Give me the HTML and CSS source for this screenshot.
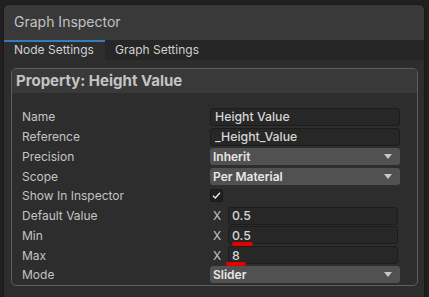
FILE: index.html
```html
<!DOCTYPE html>
<html>
<head>
<meta charset="utf-8">
<link rel="stylesheet" href="styles.css">
</head>
<body>
<div class="window">
  <div class="titlebar">Graph Inspector</div>
  <div class="tabs">
    <div class="tab active">Node Settings</div>
    <div class="tab">Graph Settings</div>
  </div>
  <div class="content">
    <div class="box">
      <div class="box-header">Property: Height Value</div>
      <div class="box-body">
        <div class="row"><span class="label">Name</span><div class="field"><span class="text">Height Value</span></div></div>
        <div class="row"><span class="label">Reference</span><div class="field"><span class="text">_Height_Value</span></div></div>
        <div class="row"><span class="label">Precision</span><div class="dropdown"><span>Inherit</span><span class="arrow"></span></div></div>
        <div class="row"><span class="label">Scope</span><div class="dropdown"><span>Per Material</span><span class="arrow"></span></div></div>
        <div class="row"><span class="label">Show In Inspector</span><div class="check"><svg width="11" height="11" viewBox="0 0 11 11"><path d="M2 5.8 L4.3 8 L9 2.8" fill="none" stroke="#e8e8e8" stroke-width="1.4"/></svg></div></div>
        <div class="row"><span class="label">Default Value</span><div class="vec"><span class="axis">X</span><div class="field num"><span class="text">0.5</span></div></div></div>
        <div class="row"><span class="label">Min</span><div class="vec"><span class="axis">X</span><div class="field num"><span class="text">0.5</span></div><span class="mark mark-min"></span></div></div>
        <div class="row"><span class="label">Max</span><div class="vec"><span class="axis">X</span><div class="field num"><span class="text">8</span></div><span class="mark mark-max"></span></div></div>
        <div class="row"><span class="label">Mode</span><div class="dropdown"><span>Slider</span><span class="arrow"></span></div></div>
      </div>
    </div>
  </div>
</div>
</body>
</html>
```
FILE: styles.css
```css
html, body {
  margin: 0;
  height: 100%;
}
body {
  background: #202020;
  font-family: Inter, "Noto Sans", sans-serif;
  color: #c4c4c4;
  padding: 4px 4px 0 3px;
  box-sizing: border-box;
  overflow: hidden;
}
.window {
  height: 100%;
  background: #2d2d2d;
  border: 1px solid #191919;
  border-bottom: none;
  border-radius: 6px 6px 0 0;
  overflow: hidden;
  display: flex;
  flex-direction: column;
}
.titlebar {
  height: 35px;
  background: #393939;
  font-size: 14px;
  line-height: 34px;
  padding-left: 10px;
  color: #c2c2c2;
  flex: none;
}
.tabs {
  height: 20px;
  background: #262626;
  display: flex;
  flex: none;
}
.tab {
  font-size: 12px;
  line-height: 20px;
  padding: 0 10px;
  color: #d0d0d0;
  white-space: nowrap;
}
.tab.active {
  background: #2d2d2d;
  box-shadow: inset 0 2px 0 #3a79bb;
  width: 101px;
  box-sizing: border-box;
}
.content {
  padding: 8px 6px 0 7px;
}
.box {
  border: 1px solid #5e5e5e;
  border-radius: 5px;
  overflow: hidden;
}
.box-header {
  height: 24px;
  background: #393939;
  font-size: 15px;
  font-weight: 700;
  line-height: 24px;
  padding-left: 4px;
  color: #c4c4c4;
}
.box-body {
  padding: 14px 17px 0 10px;
  display: grid;
  grid-auto-rows: 19.75px;
}
.row {
  display: grid;
  grid-template-columns: 188px 1fr;
  align-items: center;
}
.label {
  font-size: 12px;
  color: #c4c4c4;
}
.field {
  height: 18px;
  box-sizing: border-box;
  background: #272727;
  border: 1px solid #1c1c1c;
  border-radius: 3px;
  padding-left: 4px;
  display: flex;
  align-items: center;
}
.text {
  font-size: 12.3px;
  font-weight: 500;
  color: #d6d6d6;
}
.dropdown {
  height: 17px;
  box-sizing: border-box;
  background: #515151;
  border-radius: 3px;
  padding: 0 8px 0 3px;
  display: flex;
  align-items: center;
  justify-content: space-between;
  font-size: 12px;
  font-weight: 600;
  color: #e6e6e6;
}
.arrow {
  width: 0;
  height: 0;
  border-left: 4.5px solid transparent;
  border-right: 4.5px solid transparent;
  border-top: 5px solid #c8c8c8;
}
.check {
  width: 13px;
  height: 13px;
  box-sizing: border-box;
  background: #212121;
  border: 1px solid #191919;
  border-radius: 2px;
  display: flex;
  align-items: center;
  justify-content: center;
}
.vec {
  display: flex;
  align-items: center;
  position: relative;
  padding-right: 2px;
}
.axis {
  width: 18px;
  padding-left: 3px;
  box-sizing: border-box;
  font-size: 12px;
  color: #c4c4c4;
}
.field.num {
  flex: 1;
  padding-left: 3px;
}
.mark {
  position: absolute;
  height: 4px;
  background: #e00000;
  border-radius: 3px;
}
.mark-min {
  left: 22px;
  width: 21px;
  top: 16px;
}
.mark-max {
  left: 16px;
  width: 20px;
  top: 16px;
}
```
